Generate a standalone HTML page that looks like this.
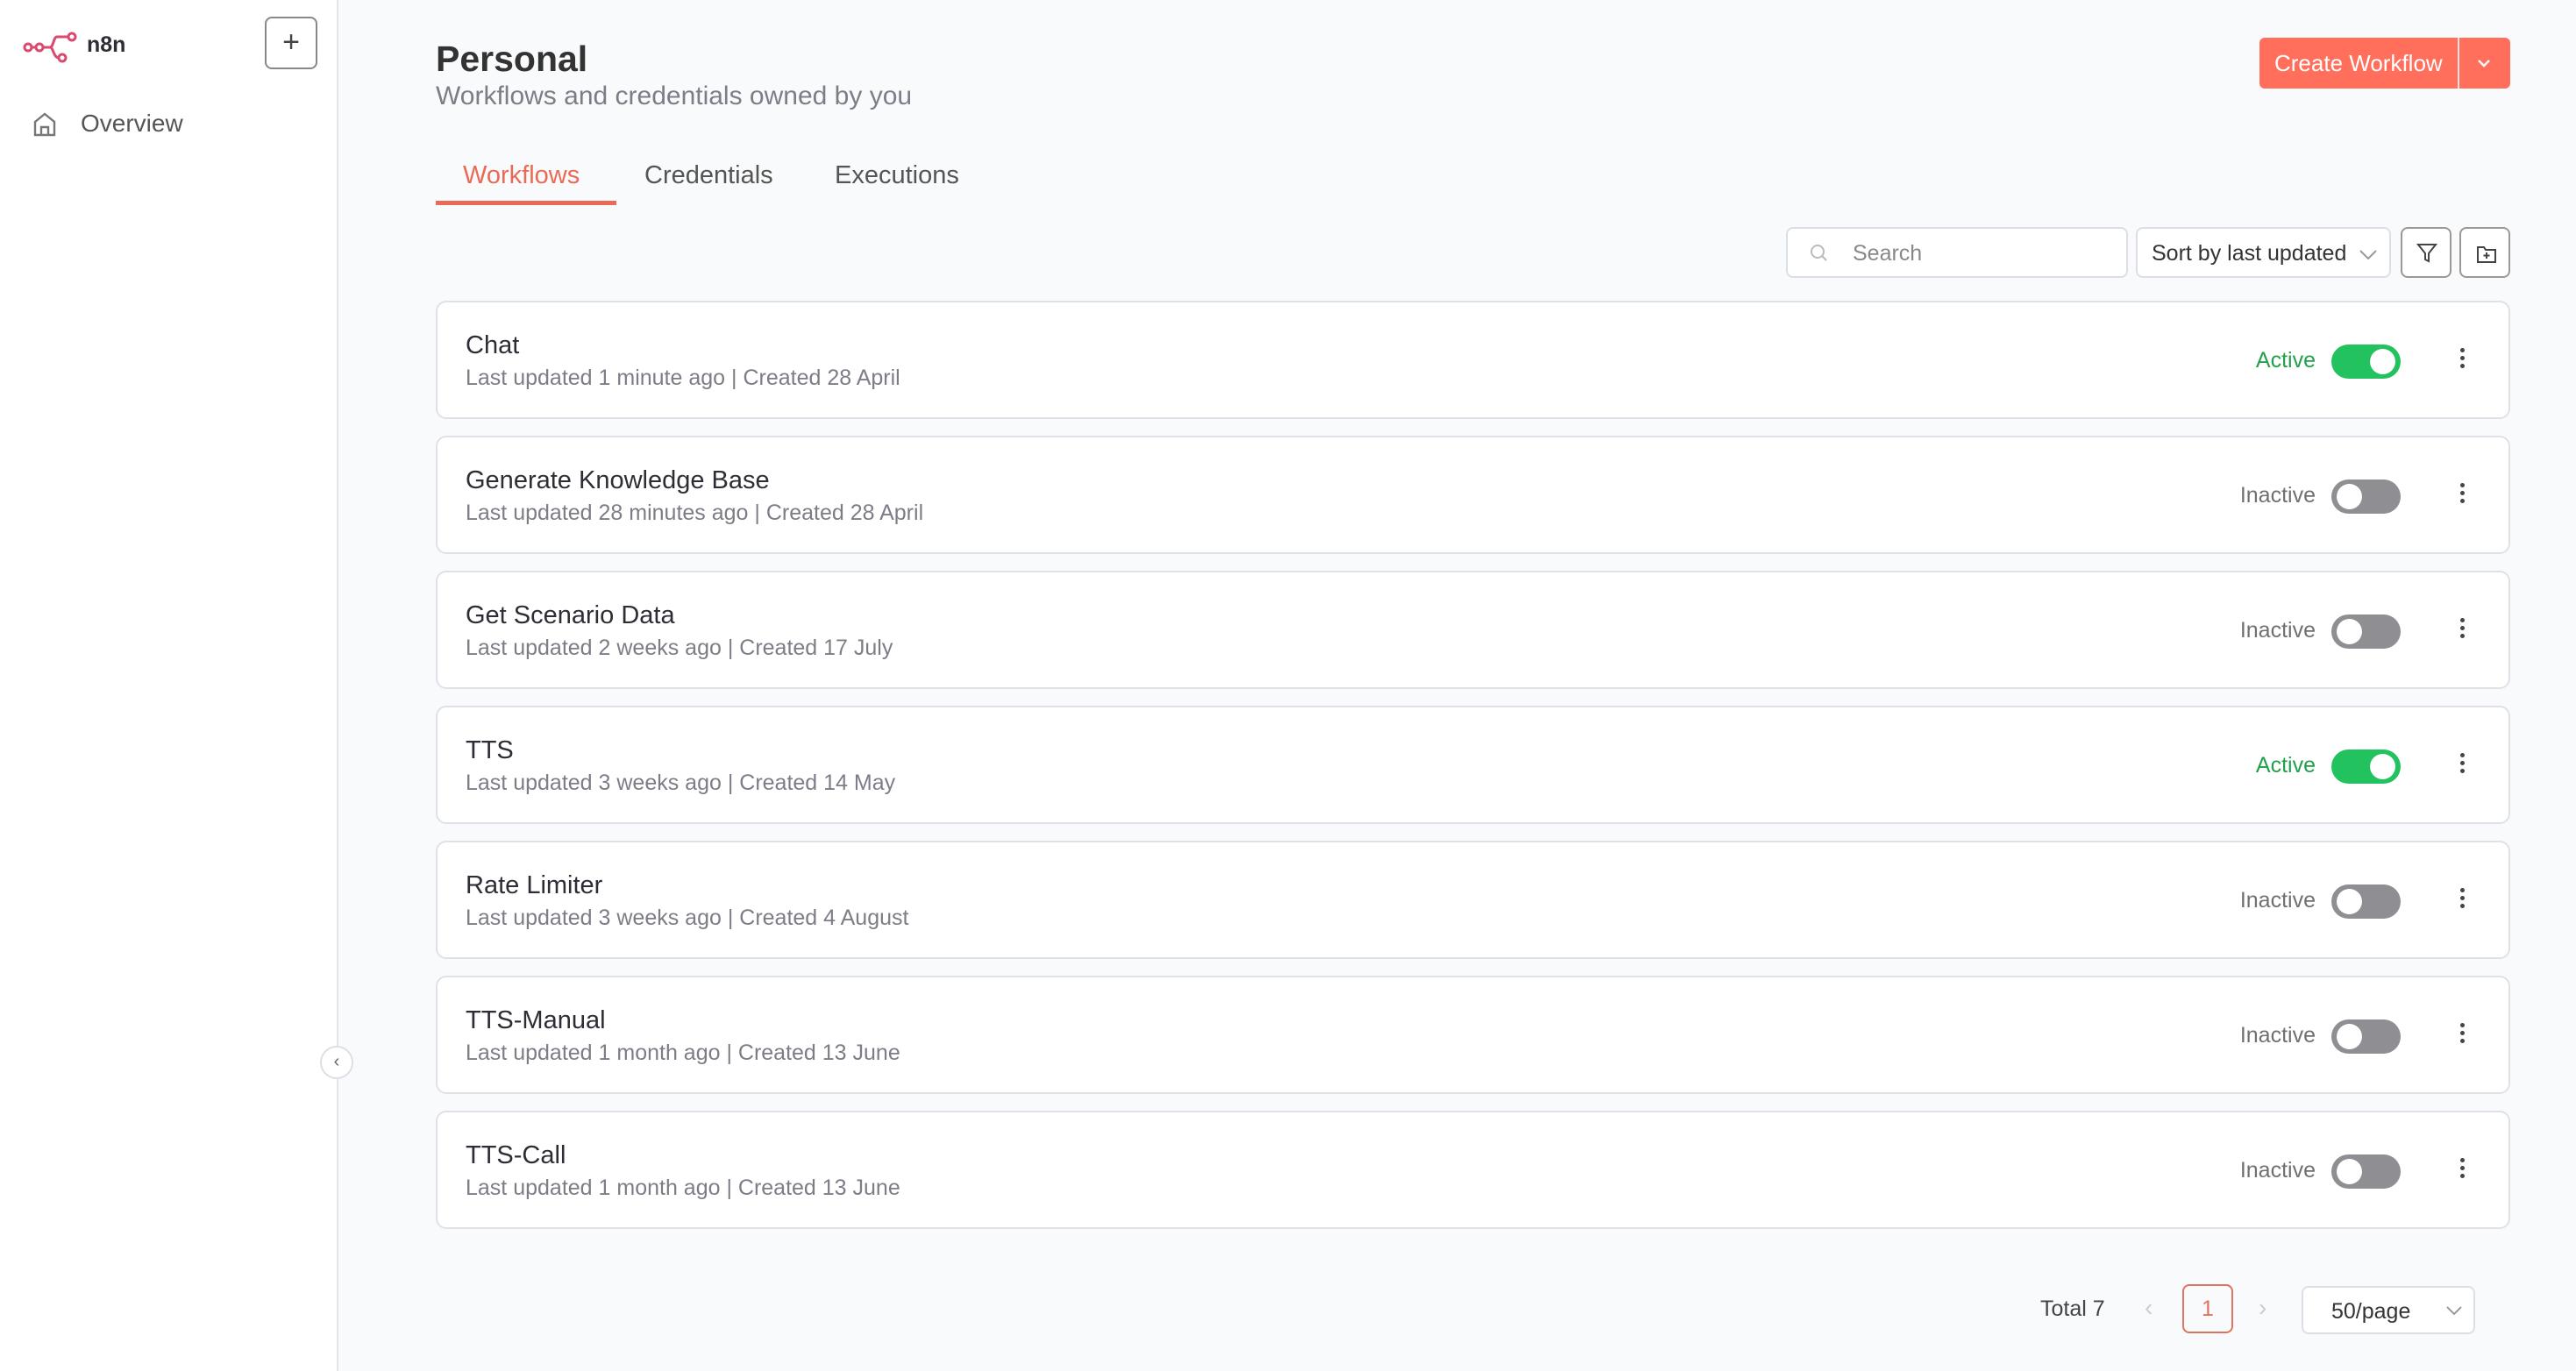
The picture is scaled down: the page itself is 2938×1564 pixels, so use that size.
<!DOCTYPE html>
<html><head><meta charset="utf-8"><style>
*{box-sizing:border-box;margin:0;padding:0}
body{width:2938px;height:1564px;background:#f9fafb;font-family:"Liberation Sans",sans-serif;position:relative;overflow:hidden;color:#333}
.abs{position:absolute}
.side{left:0;top:0;width:386px;height:1564px;background:#fff;border-right:2px solid #e3e5ea}
.card{position:absolute;left:497px;width:2366px;height:135px;background:#fff;border:2px solid #dfe1e6;border-radius:12px}
.card .t{position:absolute;left:32px;top:33px;font-size:29px;color:#2d2d35}
.card .s{position:absolute;left:32px;top:72px;font-size:25px;color:#7d7d87}
.card .st{position:absolute;right:220px;top:52px;font-size:25px;color:#707070}
.card .st.on{color:#22a04b}
.tg{position:absolute;left:2160px;top:48px;width:79px;height:39px;border-radius:20px;background:#8e8e93}
.tg::after{content:"";position:absolute;top:5px;left:6px;width:29px;height:29px;border-radius:50%;background:#fff}
.tg.on{background:#22c35e}
.tg.on::after{left:44px}
.dots{position:absolute;left:2307px;top:52px;width:6px}
.dots i{display:block;width:5px;height:5px;border-radius:50%;background:#444;margin-bottom:4px}
.box{position:absolute;background:#fff;border:2px solid #dcdfe5;border-radius:8px}
</style></head><body>
<div class="abs side"></div>
<svg class="abs" style="left:26px;top:36px" width="64" height="36" viewBox="0 0 64 36" fill="none" stroke="#d94a6f" stroke-width="3"><circle cx="6" cy="18" r="4"/><circle cx="19" cy="18" r="4"/><circle cx="56" cy="6" r="4"/><circle cx="45" cy="30" r="4"/><path d="M10 18h5M23 18h8c4 0 4-12 8-12h13M31 18c4 0 4 12 10 12"/></svg>
<div class="abs" style="left:99px;top:37px;font-size:25px;font-weight:bold;color:#2d2d35">n8n</div>
<div class="box" style="left:302px;top:19px;width:60px;height:60px;border-color:#888;border-width:2px"><div style="text-align:center;font-size:34px;line-height:54px;color:#444">+</div></div>
<svg class="abs" style="left:37px;top:127px" width="28" height="30" viewBox="0 0 28 30" fill="none" stroke="#777" stroke-width="2.4"><path d="M3 12L14 3l11 9v15H3z"/><path d="M10 27v-9h8v9"/></svg>
<div class="abs" style="left:92px;top:125px;font-size:28px;color:#555">Overview</div>
<div class="abs" style="left:365px;top:1193px;width:38px;height:38px;border-radius:50%;background:#fff;border:2px solid #dcdfe5;text-align:center;line-height:32px;font-size:20px;color:#666">‹</div>

<div class="abs" style="left:497px;top:44px;font-size:41px;font-weight:bold;color:#333">Personal</div>
<div class="abs" style="left:497px;top:93px;font-size:30px;color:#7d7d87">Workflows and credentials owned by you</div>
<div class="abs" style="left:2577px;top:43px;width:286px;height:58px;background:#ff6f5c;border-radius:6px;color:#fff;font-size:26px">
<div style="position:absolute;left:17px;top:14px">Create Workflow</div>
<div style="position:absolute;left:226px;top:0;width:2px;height:58px;background:#fff;opacity:.8"></div>
<svg style="position:absolute;left:247px;top:22px" width="18" height="14" viewBox="0 0 18 14" fill="none" stroke="#fff" stroke-width="2.4"><path d="M3 4l6 6 6-6"/></svg></div>

<div class="abs" style="left:528px;top:184px;font-size:29px;color:#ea6b55">Workflows</div>
<div class="abs" style="left:497px;top:229px;width:206px;height:5px;background:#ea6b55"></div>
<div class="abs" style="left:735px;top:184px;font-size:29px;color:#555">Credentials</div>
<div class="abs" style="left:952px;top:184px;font-size:29px;color:#555">Executions</div>

<div class="box" style="left:2037px;top:259px;width:390px;height:58px">
<svg style="position:absolute;left:25px;top:17px" width="22" height="22" viewBox="0 0 22 22" fill="none" stroke="#bbb" stroke-width="2"><circle cx="9" cy="9" r="7"/><path d="M14 14l5 5"/></svg>
<div style="position:absolute;left:74px;top:14px;font-size:25px;color:#888">Search</div></div>
<div class="box" style="left:2436px;top:259px;width:291px;height:58px">
<div style="position:absolute;left:16px;top:14px;font-size:25px;color:#333">Sort by last updated</div>
<svg style="position:absolute;left:252px;top:22px" width="22" height="14" viewBox="0 0 22 14" fill="none" stroke="#999" stroke-width="2"><path d="M2 3l9 9 9-9"/></svg></div>
<div class="box" style="left:2738px;top:259px;width:58px;height:58px;border-color:#999">
<svg style="position:absolute;left:16px;top:16px" width="24" height="24" viewBox="0 0 24 24" fill="none" stroke="#444" stroke-width="2"><path d="M2 2h20l-8 10v9l-4-2v-7z"/></svg></div>
<div class="box" style="left:2805px;top:259px;width:58px;height:58px;border-color:#999">
<svg style="position:absolute;left:17px;top:17px" width="24" height="24" viewBox="0 0 24 24" fill="none" stroke="#444" stroke-width="2"><path d="M2 4h7l2 3h11v14H2z"/><path d="M12 10v7M8.5 13.5h7"/></svg></div>

<div class="card" style="top:343px"><div class="t">Chat</div><div class="s">Last updated 1 minute ago | Created 28 April</div><div class="st on">Active</div><div class="tg on"></div><div class="dots"><i></i><i></i><i></i></div></div>
<div class="card" style="top:497px"><div class="t">Generate Knowledge Base</div><div class="s">Last updated 28 minutes ago | Created 28 April</div><div class="st">Inactive</div><div class="tg"></div><div class="dots"><i></i><i></i><i></i></div></div>
<div class="card" style="top:651px"><div class="t">Get Scenario Data</div><div class="s">Last updated 2 weeks ago | Created 17 July</div><div class="st">Inactive</div><div class="tg"></div><div class="dots"><i></i><i></i><i></i></div></div>
<div class="card" style="top:805px"><div class="t">TTS</div><div class="s">Last updated 3 weeks ago | Created 14 May</div><div class="st on">Active</div><div class="tg on"></div><div class="dots"><i></i><i></i><i></i></div></div>
<div class="card" style="top:959px"><div class="t">Rate Limiter</div><div class="s">Last updated 3 weeks ago | Created 4 August</div><div class="st">Inactive</div><div class="tg"></div><div class="dots"><i></i><i></i><i></i></div></div>
<div class="card" style="top:1113px"><div class="t">TTS-Manual</div><div class="s">Last updated 1 month ago | Created 13 June</div><div class="st">Inactive</div><div class="tg"></div><div class="dots"><i></i><i></i><i></i></div></div>
<div class="card" style="top:1267px"><div class="t">TTS-Call</div><div class="s">Last updated 1 month ago | Created 13 June</div><div class="st">Inactive</div><div class="tg"></div><div class="dots"><i></i><i></i><i></i></div></div>

<div class="abs" style="left:2327px;top:1479px;font-size:25px;color:#444">Total 7</div>
<div class="abs" style="left:2446px;top:1476px;font-size:28px;color:#ccc">‹</div>
<div class="abs" style="left:2489px;top:1465px;width:58px;height:56px;border:2px solid #e0735f;border-radius:8px;text-align:center;line-height:52px;font-size:25px;color:#e0735f">1</div>
<div class="abs" style="left:2576px;top:1476px;font-size:28px;color:#ccc">›</div>
<div class="box" style="left:2625px;top:1467px;width:198px;height:55px">
<div style="position:absolute;left:32px;top:13px;font-size:25px;color:#333">50/page</div>
<svg style="position:absolute;left:162px;top:20px" width="20" height="12" viewBox="0 0 20 12" fill="none" stroke="#999" stroke-width="2"><path d="M2 2l8 8 8-8"/></svg></div>
</body></html>
